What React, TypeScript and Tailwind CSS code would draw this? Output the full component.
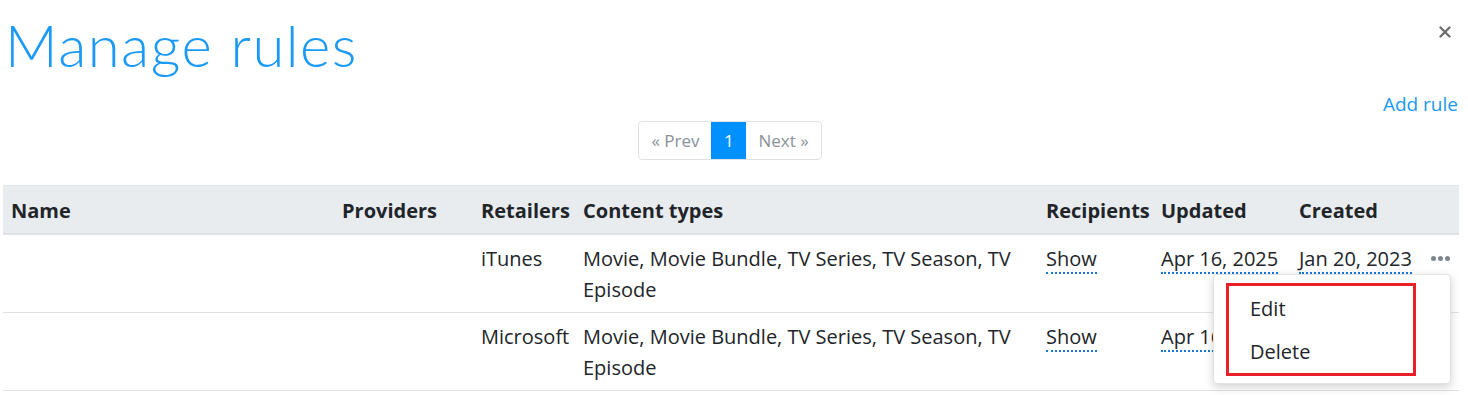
import { X } from 'lucide-react';

type Rule = {
  name: string;
  providers: string;
  retailer: string;
  contentTypes: string;
  updated: string;
  created: string;
};

const rules: Rule[] = [
  {
    name: '',
    providers: '',
    retailer: 'iTunes',
    contentTypes: 'Movie, Movie Bundle, TV Series, TV Season, TV Episode',
    updated: 'Apr 16, 2025',
    created: 'Jan 20, 2023',
  },
  {
    name: '',
    providers: '',
    retailer: 'Microsoft',
    contentTypes: 'Movie, Movie Bundle, TV Series, TV Season, TV Episode',
    updated: 'Apr 16, 2025',
    created: 'Jan 20, 2023',
  },
];

const dotted = 'border-b-2 border-dotted border-[#1478d4]';

export default function App() {
  return (
    <div className="w-[1468px] h-[395px] overflow-hidden bg-white font-['Open_Sans',sans-serif] text-[#212529] text-[20px] leading-[31px]">
      {/* Title + close */}
      <div className="flex items-start justify-between pl-[5px] pr-[14px] pt-[13px]">
        <h1 className="font-['Lato',sans-serif] font-light text-[58px] leading-[64px] text-[#1b9af5] tracking-[1.5px]">
          Manage rules
        </h1>
        <button className="mt-[10px] text-[#6f6f6f]">
          <X size={18} strokeWidth={3.2} />
        </button>
      </div>

      {/* Add rule */}
      <div className="flex justify-end pr-[10px] mt-[12px]">
        <a className="text-[19px] leading-[31px] text-[#1b98f2]">Add rule</a>
      </div>

      {/* Pagination */}
      <div className="flex justify-center pr-[8px] mt-[1px]">
        <div className="flex h-[39px] rounded border border-[#dee2e6] overflow-hidden text-[17px] text-[#8a9299]">
          <span className="px-[12px] flex items-center">« Prev</span>
          <span className="w-[35px] flex items-center justify-center bg-[#0091ff] text-white">1</span>
          <span className="px-[12px] flex items-center">Next »</span>
        </div>
      </div>

      {/* Table */}
      <div className="relative mt-[25px] pl-[3px] pr-[9px]">
        <table className="w-full table-fixed border-collapse text-left">
          <colgroup>
            <col className="w-[331px]" />
            <col className="w-[139px]" />
            <col className="w-[102px]" />
            <col className="w-[463px]" />
            <col className="w-[115px]" />
            <col className="w-[138px]" />
            <col className="w-[132px]" />
            <col className="w-[36px]" />
          </colgroup>
          <thead>
            <tr className="bg-[#e9ecef] border-t border-[#e4e7ea] border-b-2 border-b-[#dee2e6]">
              {['Name', 'Providers', 'Retailers', 'Content types', 'Recipients', 'Updated', 'Created', ''].map((h, i) => (
                <th key={i} className="px-[8px] pt-[9px] pb-[7px] font-bold whitespace-nowrap">
                  {h}
                </th>
              ))}
            </tr>
          </thead>
          <tbody>
            {rules.map((r, i) => (
              <tr key={i} className="border-b border-[#dee2e6] align-top">
                <td className="px-[8px] pt-[8px] pb-[7px]">{r.name}</td>
                <td className="px-[8px] pt-[8px] pb-[7px]">{r.providers}</td>
                <td className="px-[8px] pt-[8px] pb-[7px] whitespace-nowrap">{r.retailer}</td>
                <td className="px-[8px] pt-[8px] pb-[7px]">{r.contentTypes}</td>
                <td className="px-[8px] pt-[8px] pb-[7px]">
                  <span className={dotted}>Show</span>
                </td>
                <td className="px-[8px] pt-[8px] pb-[7px] whitespace-nowrap">
                  <span className={dotted}>{r.updated}</span>
                </td>
                <td className="px-[8px] pt-[8px] pb-[7px] whitespace-nowrap">
                  <span className={dotted}>{r.created}</span>
                </td>
                <td className="px-[8px] pt-[8px] pb-[7px]">
                  {i === 0 && (
                    <div className="flex gap-[2px] pt-[13px]">
                      <span className="w-[5px] h-[5px] rounded-full bg-[#7d8790]" />
                      <span className="w-[5px] h-[5px] rounded-full bg-[#7d8790]" />
                      <span className="w-[5px] h-[5px] rounded-full bg-[#7d8790]" />
                    </div>
                  )}
                </td>
              </tr>
            ))}
          </tbody>
        </table>

        {/* Row action menu */}
        <div className="absolute top-[89px] right-[17px] w-[238px] h-[110px] bg-white rounded border border-[#e3e3e3] shadow-[0_3px_10px_rgba(0,0,0,0.18)] pt-[8px] pl-[12px]">
          <div className="w-[190px] h-[93px] border-[3px] border-[#e8202a] flex flex-col justify-center">
            <div className="pl-[21px] py-[6px]">Edit</div>
            <div className="pl-[21px] py-[6px]">Delete</div>
          </div>
        </div>
      </div>
    </div>
  );
}
